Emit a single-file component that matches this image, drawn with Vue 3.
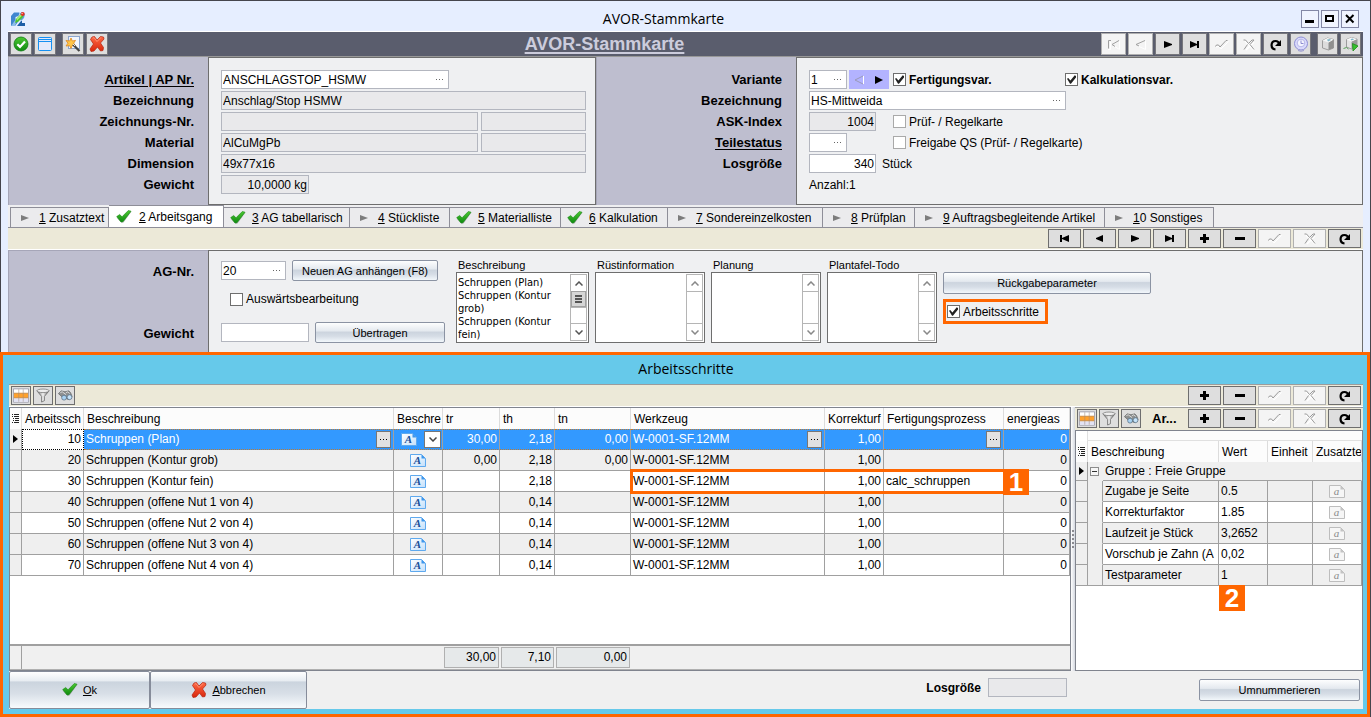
<script setup>
import { ref } from 'vue'

const recordNav = [
  { icon: 'first', off: true, label: 'Erster Datensatz' },
  { icon: 'prev', off: true, label: 'Voriger Datensatz' },
  { icon: 'next', label: 'Nächster Datensatz' },
  { icon: 'last', label: 'Letzter Datensatz' },
  { icon: 'post', off: true, label: 'Speichern' },
  { icon: 'cancel', off: true, label: 'Verwerfen' },
  { icon: 'refresh', label: 'Aktualisieren' },
]

const editNav = [
  { icon: 'plus', label: 'Hinzufügen' },
  { icon: 'minus', label: 'Löschen' },
  { icon: 'post', off: true, label: 'Speichern' },
  { icon: 'cancel', off: true, label: 'Verwerfen' },
  { icon: 'refresh', label: 'Aktualisieren' },
]

const agNav = [
  { icon: 'first', label: 'Erster Arbeitsgang' },
  { icon: 'prev', label: 'Voriger Arbeitsgang' },
  { icon: 'next', label: 'Nächster Arbeitsgang' },
  { icon: 'last', label: 'Letzter Arbeitsgang' },
  ...editNav,
]

const gridTools = [
  { icon: 'columns', label: 'Spalten' },
  { icon: 'funnel', label: 'Filter' },
  { icon: 'binoculars', label: 'Suchen' },
]

const tabs = [
  { key: '1', rest: ' Zusatztext' },
  { key: '2', rest: ' Arbeitsgang', done: true, active: true },
  { key: '3', rest: ' AG tabellarisch', done: true },
  { key: '4', rest: ' Stückliste' },
  { key: '5', rest: ' Materialliste', done: true },
  { key: '6', rest: ' Kalkulation', done: true },
  { key: '7', rest: ' Sondereinzelkosten' },
  { key: '8', rest: ' Prüfplan' },
  { key: '9', rest: ' Auftragsbegleitende Artikel' },
  { key: '1', rest: '0 Sonstiges' },
]

const memos = [
  {
    id: 'beschreibung',
    label: 'Beschreibung',
    wide: true,
    text: 'Schruppen (Plan)\nSchruppen (Kontur grob)\nSchruppen (Kontur fein)',
  },
  { id: 'ruest', label: 'Rüstinformation', text: '' },
  { id: 'planung', label: 'Planung', text: '' },
  { id: 'todo', label: 'Plantafel-Todo', text: '' },
]

const steps = [
  { nr: 10, name: 'Schruppen (Plan)', tr: '30,00', th: '2,18', tn: '0,00', process: '' },
  { nr: 20, name: 'Schruppen (Kontur grob)', tr: '0,00', th: '2,18', tn: '0,00', process: '' },
  { nr: 30, name: 'Schruppen (Kontur fein)', tr: '', th: '2,18', tn: '', process: 'calc_schruppen' },
  { nr: 40, name: 'Schruppen (offene Nut 1 von 4)', tr: '', th: '0,14', tn: '', process: '' },
  { nr: 50, name: 'Schruppen (offene Nut 2 von 4)', tr: '', th: '0,14', tn: '', process: '' },
  { nr: 60, name: 'Schruppen (offene Nut 3 von 4)', tr: '', th: '0,14', tn: '', process: '' },
  { nr: 70, name: 'Schruppen (offene Nut 4 von 4)', tr: '', th: '0,14', tn: '', process: '' },
]

const params = [
  { name: 'Zugabe je Seite', value: '0.5' },
  { name: 'Korrekturfaktor', value: '1.85' },
  { name: 'Laufzeit je Stück', value: '3,2652' },
  { name: 'Vorschub je Zahn (A', value: '0,02' },
  { name: 'Testparameter', value: '1' },
]

const fertigung = ref(true)
const kalkulation = ref(true)
const arbeitsschritte = ref(true)
</script>

<template>
  <div class="app">
    <svg class="sprite" width="0" height="0" aria-hidden="true">
      <defs>
        <linearGradient id="g-green" x1="0" y1="0" x2="0" y2="1">
          <stop offset="0" stop-color="#4cc832" />
          <stop offset="1" stop-color="#0f8a10" />
        </linearGradient>
        <linearGradient id="g-red" x1="0" y1="0" x2="0" y2="1">
          <stop offset="0" stop-color="#ff6a45" />
          <stop offset="1" stop-color="#d8260c" />
        </linearGradient>
        <linearGradient id="g-doc" x1="0" y1="0" x2="1" y2="1">
          <stop offset="0" stop-color="#ffffff" />
          <stop offset="1" stop-color="#c4e0fb" />
        </linearGradient>
        <linearGradient id="g-metal" x1="0" y1="0" x2="1" y2="0">
          <stop offset="0" stop-color="#6a6a6a" />
          <stop offset="0.5" stop-color="#f2f2f2" />
          <stop offset="1" stop-color="#5c5c5c" />
        </linearGradient>
      </defs>

      <symbol id="i-logo" viewBox="0 0 16 16">
        <path d="M1 15V5l3-3.500h5.500l-1 3.500-3 1v3l2-1.500 1.500 2-4 5.500z" fill="#3f86cf" />
        <path d="M1 15l5-7v4l-1 3z" fill="#8dbdea" />
        <path d="M7 15l4-5h1v2h3v3z" fill="#1d5ea6" />
        <path d="M9 3l3-2 3 2-1 4-3 3-1-2 2-3z" fill="#5f9fd8" />
        <path d="M5 12l1-4 5-5 2.500 2.500-5 5z" fill="#4fc52e" />
        <path d="M6.500 8l5-5 1 1-5.500 5.500z" fill="#aaf07c" />
        <circle cx="12.700" cy="3" r="2" fill="#e2301f" />
        <circle cx="12.100" cy="2.500" r=".7" fill="#ffc4b8" />
      </symbol>
      <symbol id="i-okcircle" viewBox="0 0 16 16">
        <circle cx="8" cy="8" r="7" fill="url(#g-green)" stroke="#0c7a10" stroke-width=".8" />
        <path d="M4.300 8.200l2.700 2.700L12 5.400" fill="none" stroke="#fff" stroke-width="2.200" />
      </symbol>
      <symbol id="i-window" viewBox="0 0 16 16">
        <rect x="1.500" y="1.500" width="13" height="13" rx="1" fill="#e3e9fb" stroke="#1590f2" />
        <path d="M2 3.500h12M2 5.500h12" stroke="#1590f2" />
      </symbol>
      <symbol id="i-wand" viewBox="0 0 16 16">
        <rect x="3.500" y=".5" width="11" height="12" fill="#f2f6fd" stroke="#8da6cd" />
        <path d="M6 2l1.300 3 3.200-.6-1.800 2.800 1.800 2.800-3.200-.5L6 12.500 4.700 9.700 1 10l2-2.800L1 4.500l3.700.5z" fill="#ffc64a" stroke="#e0861b" stroke-width=".8" />
        <path d="M8 8.500l6.500 6.500" stroke="#444" stroke-width="2.200" />
        <path d="M8 8l2 2" stroke="#e8e8e8" stroke-width="1" />
      </symbol>
      <symbol id="i-redx" viewBox="0 0 16 16">
        <path d="M3 1l2.500-.5L8 4l3.500-3.500L14.500 1 15 3l-3.500 4 3 4.500-.5 3-2.500.5L8.500 11 5 15l-3 .5L1 13l3.500-5L1.500 3.500z" fill="url(#g-red)" stroke="#b5220f" stroke-width=".7" />
        <path d="M3.500 2l1.500-.3L8 5.500l4-4" fill="none" stroke="#ff9c80" stroke-width=".8" />
      </symbol>
      <symbol id="i-check" viewBox="0 0 16 16">
        <path d="M1 9l3-2.500 2.500 2.300L12.500 2 15.500 2.600 7.500 13.500 5.500 13.700z" fill="#888" opacity=".6" />
        <path d="M.7 7.600L3.700 5.500 6 7.800 12.300 1.500 15 2.200 7 12.700 5 13z" fill="url(#g-green)" stroke="#178a14" stroke-width=".6" />
      </symbol>
      <symbol id="i-arrow" viewBox="0 0 8 8"><path d="M0 1l8 3-8 3z" fill="#7c7c7c" /></symbol>

      <symbol id="i-first" viewBox="0 0 15 15"><path d="M3 4h2v7H3zM12 4v7L5 8V7z" fill="#000" /></symbol>
      <symbol id="i-prev" viewBox="0 0 15 15"><path d="M11 4v7L4 8V7z" fill="#000" /></symbol>
      <symbol id="i-next" viewBox="0 0 15 15"><path d="M4 4v7l8-3V7z" fill="#000" /></symbol>
      <symbol id="i-last" viewBox="0 0 15 15"><path d="M3 4v7l7-3V7zM10 4h2v7h-2z" fill="#000" /></symbol>
      <symbol id="i-first-off" viewBox="0 0 15 15">
        <path d="M4.500 4.500V12.500H2M13.500 4v8.500L7 8.500" fill="none" stroke="#fff" />
        <path d="M5 3.500H2.500V11.500M13 3.500L6 7.500l3 2" fill="none" stroke="#a0a0a0" />
      </symbol>
      <symbol id="i-prev-off" viewBox="0 0 15 15">
        <path d="M12.500 4v8.500L5 9" fill="none" stroke="#fff" />
        <path d="M12 3.500L3 7.500l3 1.500" fill="none" stroke="#a0a0a0" />
      </symbol>
      <symbol id="i-post" viewBox="0 0 15 15">
        <path d="M2 10l3-.5 2 2.500 7-7V4" fill="none" stroke="#fff" />
        <path d="M1.500 9.500l1-1.500h2l1.500 2L12 3.500h1.500" fill="none" stroke="#999" />
      </symbol>
      <symbol id="i-cancel" viewBox="0 0 15 15">
        <path d="M4 4l9 9M13 5l-8 8" stroke="#fff" stroke-width="1.500" />
        <path d="M2.500 3h2l3 3.500L11 3h2L9 7.500l4 5M6.500 7.500L3 12.500" fill="none" stroke="#999" />
      </symbol>
      <symbol id="i-refresh" viewBox="0 0 15 15">
        <path d="M7.500 12.500C2 12 2.500 4 7.500 4c2.500 0 3.300 1.200 3.700 3" fill="none" stroke="#000" stroke-width="2.200" />
        <path d="M13 3v6H7z" fill="#000" />
      </symbol>
      <symbol id="i-plus" viewBox="0 0 15 15"><path d="M6 3h3v3h3v3H9v3H6V9H3V6h3z" fill="#000" /></symbol>
      <symbol id="i-minus" viewBox="0 0 15 15"><path d="M3 6h10v3H3z" fill="#000" /></symbol>

      <symbol id="i-clock" viewBox="0 0 16 16">
        <circle cx="8" cy="7.500" r="6.500" fill="#d9d9fb" stroke="#8f8fd6" />
        <circle cx="8" cy="7" r="3.800" fill="#f4f4ff" stroke="#a9a9e2" stroke-width=".8" />
        <path d="M8 4.500V7.500h2.500" stroke="#8c8cd0" fill="none" />
        <path d="M5 14.500q3 1.500 6 0" stroke="#9a9ad0" fill="none" />
      </symbol>
      <symbol id="i-box" viewBox="0 0 16 16">
        <path d="M2.500 4.500l5-2.500 6 1.500v8.500L8.500 14 2.500 12z" fill="#dcdcdc" stroke="#8c8c8c" stroke-width=".8" />
        <path d="M8.500 6.500l5-3v8.500l-5 2z" fill="#8f8f8f" />
        <path d="M2.500 4.500l6 2 5-3-6-1.500z" fill="#f6f6f6" />
        <path d="M7 3.500l3-.5 1 1-3 1.500z" fill="#7fb6c8" />
      </symbol>
      <symbol id="i-boxgo" viewBox="0 0 16 16">
        <path d="M3.500 3.500l5-2 5.500 1.500v7.500L8.500 13 3.500 11z" fill="#e4e4e4" stroke="#8c8c8c" stroke-width=".8" />
        <path d="M8.500 5.500l5.500-2.500v7.500l-5.500 2.500z" fill="#9a9a9a" />
        <path d="M3.500 3.500l5 2 5.500-2.500-5.500-1.500z" fill="#fafafa" />
        <path d="M7.500 3l2.500-.5 1 1-2.500 1z" fill="#7fb6c8" />
        <path d="M.5 12.500l3-1 2 1.500" stroke="#5aa35a" fill="none" />
        <path d="M9.500 7.500l5.500 2.500-5 5z" fill="#37c22f" stroke="#1f8c1c" stroke-width=".8" />
      </symbol>

      <symbol id="i-columns" viewBox="0 0 18 16">
        <path d="M.5.500h17v15H.5z" fill="#fff" stroke="#9a9aa8" />
        <path d="M1 11h16v4H1z" fill="#e2e2f4" />
        <path d="M1 5h16v6H1z" fill="#ffa12c" />
        <path d="M6.500 1v14M11.500 1v14M1 5.500h16M1 10.500h16" stroke="#a08a78" stroke-opacity=".6" />
      </symbol>
      <symbol id="i-funnel" viewBox="0 0 16 16">
        <path d="M1.500 3l5 6v6l3-1.500V9l5-6z" fill="url(#g-metal)" stroke="#666" stroke-width=".8" />
        <ellipse cx="8" cy="3" rx="6.500" ry="1.900" fill="#ededed" stroke="#777" stroke-width=".8" />
      </symbol>
      <symbol id="i-binoculars" viewBox="0 0 16 16">
        <path d="M1 6l3-3 4 1 4-1 2 2 1.500 4-3 3.500-3-1-1.500-3-3 1z" fill="#8e9090" stroke="#5e6060" stroke-width=".7" />
        <path d="M3 5l2-1 4 3M9 5l2-1 2 2" fill="none" stroke="#dedede" />
        <circle cx="7" cy="10.300" r="2.600" fill="#a8d2f2" stroke="#587086" stroke-width=".8" />
        <circle cx="12.800" cy="9.800" r="2.600" fill="#c5e2f8" stroke="#587086" stroke-width=".8" />
      </symbol>
      <symbol id="i-page" viewBox="0 0 16 13">
        <path d="M.5.500h11l4 4v8H.5z" fill="url(#g-doc)" stroke="#5ea9ee" />
        <path d="M11.500.500v4h4z" fill="#3f97ec" />
      </symbol>
      <symbol id="i-page-off" viewBox="0 0 16 13">
        <path d="M.5.500h11l4 4v8H.5z" fill="#f6f6f6" stroke="#bdbdbd" />
        <path d="M11.500.500v4h4z" fill="#c4c4c4" />
      </symbol>
      <symbol id="i-list" viewBox="0 0 7 9">
        <path d="M0 .5h1M2 .5h5M0 2.500h1M2 2.500h5M1 4.500h1M3 4.500h4M1 6.500h1M3 6.500h4M0 8.500h1M2 8.500h5" stroke="#222" />
      </symbol>
      <symbol id="i-current" viewBox="0 0 5 8"><path d="M0 0v8l5-4z" fill="#000" /></symbol>
      <symbol id="i-up" viewBox="0 0 8 5"><path d="M.5 4.500L4 1l3.500 3.500" fill="none" stroke="currentColor" stroke-width="1.500" /></symbol>
      <symbol id="i-down" viewBox="0 0 8 5"><path d="M.5.500L4 4 7.500.500" fill="none" stroke="currentColor" stroke-width="1.500" /></symbol>
      <symbol id="i-dots" viewBox="0 0 8 2"><path d="M0 0h1v1H0zM3 0h1v1H3zM6 0h1v1H6z" fill="currentColor" /></symbol>
    </svg>

    <main class="window">
      <header class="titlebar">
        <svg class="logo"><use href="#i-logo" /></svg>
        <h1 class="caption">AVOR-Stammkarte</h1>
        <div class="winbtns">
          <button class="winbtn" aria-label="Minimieren"><svg viewBox="0 0 10 10"><path d="M0 6h9v3H0z" /></svg></button>
          <button class="winbtn" aria-label="Maximieren"><svg viewBox="0 0 10 10"><path d="M0 1h9v7H0zM2 3v3h5V3z" fill-rule="evenodd" /></svg></button>
          <button class="winbtn" aria-label="Schließen"><svg viewBox="0 0 10 10"><path d="M1 1l7.500 7.500M8.500 1L1 8.500" stroke="#000" stroke-width="2" /></svg></button>
        </div>
      </header>

      <div class="toolbar">
        <button class="tool" aria-label="Übernehmen"><svg><use href="#i-okcircle" /></svg></button>
        <button class="tool" aria-label="Fenster"><svg><use href="#i-window" /></svg></button>
        <span class="gap"></span>
        <button class="tool" aria-label="Assistent"><svg><use href="#i-wand" /></svg></button>
        <button class="tool" aria-label="Löschen"><svg><use href="#i-redx" /></svg></button>
        <h2 class="heading">AVOR-Stammkarte</h2>
        <div class="right-tools">
          <button v-for="b in recordNav" :key="b.icon" class="nav top" :disabled="b.off" :aria-label="b.label">
            <svg><use :href="'#i-' + b.icon + (b.off && ['first', 'prev'].includes(b.icon) ? '-off' : '')" /></svg>
          </button>
          <button class="tool" aria-label="Zeit"><svg><use href="#i-clock" /></svg></button>
          <span class="gap"></span>
          <button class="tool" aria-label="Lager"><svg><use href="#i-box" /></svg></button>
          <button class="tool" aria-label="Buchen"><svg><use href="#i-boxgo" /></svg></button>
        </div>
      </div>

      <section class="master">
        <div class="labels">
          <label for="artikel"><a href="#artikel">Artikel | AP Nr.</a></label>
          <label for="bez1">Bezeichnung</label>
          <label for="zeichnung">Zeichnungs-Nr.</label>
          <label for="material">Material</label>
          <label for="dimension">Dimension</label>
          <label for="gewicht">Gewicht</label>
        </div>
        <div class="fields">
          <div class="row">
            <span class="lookup w228"><input id="artikel" value="ANSCHLAGSTOP_HSMW" /><button aria-label="Artikel wählen"><svg><use href="#i-dots" /></svg></button></span>
          </div>
          <div class="row"><input id="bez1" class="field w365" readonly value="Anschlag/Stop HSMW" /></div>
          <div class="row">
            <input id="zeichnung" class="field w257" readonly />
            <input class="field w105" readonly aria-label="Zeichnungsindex" />
          </div>
          <div class="row">
            <input id="material" class="field w257" readonly value="AlCuMgPb" />
            <input class="field w105" readonly aria-label="Materialzusatz" />
          </div>
          <div class="row"><input id="dimension" class="field w365" readonly value="49x77x16" /></div>
          <div class="row"><input id="gewicht" class="field w88 num" readonly value="10,0000 kg" /></div>
        </div>
        <div class="labels">
          <label for="variante">Variante</label>
          <label for="bez2">Bezeichnung</label>
          <label for="ask">ASK-Index</label>
          <label for="teilestatus"><a href="#teilestatus">Teilestatus</a></label>
          <label for="los">Losgröße</label>
        </div>
        <div class="fields">
          <div class="row split">
            <div class="variant">
              <span class="lookup w38"><input id="variante" value="1" /><button aria-label="Variante wählen"><svg><use href="#i-dots" /></svg></button></span>
              <span class="stepper">
                <button aria-label="Vorige Variante"><svg viewBox="0 0 10 10"><path d="M9.500 1v8" stroke="#fff" /><path d="M9 1L1 5l8 4" fill="none" stroke="#9a9ab8" /></svg></button>
                <button aria-label="Nächste Variante"><svg viewBox="0 0 10 10"><path d="M1 1v8l8-4z" /></svg></button>
              </span>
            </div>
            <label class="check strong"><input v-model="fertigung" type="checkbox" />Fertigungsvar.</label>
            <label class="check strong"><input v-model="kalkulation" type="checkbox" />Kalkulationsvar.</label>
          </div>
          <div class="row">
            <span class="lookup w257"><input id="bez2" value="HS-Mittweida" /><button aria-label="Bezeichnung wählen"><svg><use href="#i-dots" /></svg></button></span>
          </div>
          <div class="row split">
            <input id="ask" class="field w67 num" readonly value="1004" />
            <label class="check soft"><input type="checkbox" />Prüf- / Regelkarte</label>
          </div>
          <div class="row split">
            <span class="lookup w38"><input id="teilestatus" /><button aria-label="Teilestatus wählen"><svg><use href="#i-dots" /></svg></button></span>
            <label class="check soft wide">
              <input type="checkbox" />Freigabe QS (Prüf- / Regelkarte)
            </label>
          </div>
          <div class="row unit"><input id="los" class="field w67 num white" value="340" /><span>Stück</span></div>
          <div class="row">Anzahl:1</div>
        </div>
      </section>

      <div class="tabs" role="tablist">
        <button v-for="(t, i) in tabs" :key="i" role="tab" class="tab" :class="{ active: t.active }" :aria-selected="!!t.active">
          <span class="tabicon">
            <svg v-if="t.done" class="done"><use href="#i-check" /></svg>
            <svg v-else class="todo"><use href="#i-arrow" /></svg>
          </span>
          <span><u>{{ t.key }}</u>{{ t.rest }}</span>
        </button>
      </div>

      <div class="navstrip">
        <button v-for="b in agNav" :key="b.label" class="nav" :disabled="b.off" :aria-label="b.label">
          <svg><use :href="'#i-' + b.icon" /></svg>
        </button>
      </div>

      <section class="operation">
        <div class="labels op">
          <label for="agnr">AG-Nr.</label>
          <label for="aggewicht">Gewicht</label>
        </div>
        <div class="opfields">
          <div class="opleft">
            <div class="oprow">
              <span class="lookup w65"><input id="agnr" value="20" /><button aria-label="AG wählen"><svg><use href="#i-dots" /></svg></button></span>
              <button class="push grow">Neuen AG anhängen (F8)</button>
            </div>
            <label class="check ext"><input type="checkbox" />Auswärtsbearbeitung</label>
            <div class="oprow">
              <input id="aggewicht" class="field w88 white" />
              <button class="push w130">Übertragen</button>
            </div>
          </div>
          <div v-for="m in memos" :key="m.id" class="memo" :class="{ wide: m.wide }">
            <label :for="m.id">{{ m.label }}</label>
            <div class="memobox">
              <textarea :id="m.id" :value="m.text"></textarea>
              <div class="scroll">
                <button aria-label="Nach oben"><svg><use href="#i-up" /></svg></button>
                <span v-if="m.text" class="thumb"></span>
                <span class="track"></span>
                <button aria-label="Nach unten"><svg><use href="#i-down" /></svg></button>
              </div>
            </div>
          </div>
          <div class="opright">
            <button class="push tall">Rückgabeparameter</button>
            <label class="check marked"><input v-model="arbeitsschritte" type="checkbox" />Arbeitsschritte</label>
          </div>
        </div>
      </section>
    </main>

    <section class="dialog">
      <h2 class="caption dlg">Arbeitsschritte</h2>
      <div class="sheet">
        <div class="gridbar">
          <button v-for="g in gridTools" :key="g.icon" class="gtool" :aria-label="g.label"><svg><use :href="'#i-' + g.icon" /></svg></button>
          <div class="navgroup">
            <button v-for="b in editNav" :key="b.icon" class="nav" :disabled="b.off" :aria-label="b.label"><svg><use :href="'#i-' + b.icon" /></svg></button>
          </div>
        </div>

        <div class="panes">
          <div class="gridpane">
            <table class="grid">
              <colgroup>
                <col class="c12" /><col class="c62" /><col /><col class="c49" /><col class="c57" /><col class="c55" />
                <col class="c76" /><col class="c194" /><col class="c59" /><col class="c120" /><col class="c66" />
              </colgroup>
              <thead>
                <tr>
                  <th class="ind"><svg class="list"><use href="#i-list" /></svg></th>
                  <th>Arbeitssch</th>
                  <th>Beschreibung</th>
                  <th>Beschre</th>
                  <th>tr</th>
                  <th>th</th>
                  <th>tn</th>
                  <th>Werkzeug</th>
                  <th>Korrekturf</th>
                  <th>Fertigungsprozess</th>
                  <th>energieas</th>
                </tr>
              </thead>
              <tbody>
                <tr v-for="(s, i) in steps" :key="s.nr" :class="{ selected: i === 0 }">
                  <td class="ind"><svg v-if="i === 0" class="current"><use href="#i-current" /></svg></td>
                  <td class="num first">{{ s.nr }}</td>
                  <td class="over">{{ s.name }}<button v-if="i === 0" class="dots" aria-label="Beschreibung bearbeiten"><svg><use href="#i-dots" /></svg></button></td>
                  <td class="doc">
                    <span class="page"><svg><use href="#i-page" /></svg><b>A</b></span>
                    <button v-if="i === 0" class="drop" aria-label="Auswahl öffnen"><svg><use href="#i-down" /></svg></button>
                  </td>
                  <td class="num">{{ s.tr }}</td>
                  <td class="num">{{ s.th }}</td>
                  <td class="num">{{ s.tn }}</td>
                  <td class="over">W-0001-SF.12MM<button v-if="i === 0" class="dots" aria-label="Werkzeug wählen"><svg><use href="#i-dots" /></svg></button></td>
                  <td class="num">1,00</td>
                  <td class="over">
                    {{ s.process }}<button v-if="i === 0" class="dots" aria-label="Prozess wählen"><svg><use href="#i-dots" /></svg></button>
                    <span v-if="s.process" class="frame"></span>
                    <span v-if="s.process" class="badge one">1</span>
                  </td>
                  <td class="num">0</td>
                </tr>
              </tbody>
            </table>
            <div class="summary">
              <span class="sind"></span><span></span><span></span><span></span>
              <output>30,00</output><output>7,10</output><output>0,00</output>
            </div>
          </div>

          <div class="splitter"><i></i><i></i><i></i><i></i><i></i></div>

          <div class="parampane">
            <div class="gridbar small">
              <button v-for="g in gridTools" :key="g.icon" class="gtool" :aria-label="g.label"><svg><use :href="'#i-' + g.icon" /></svg></button>
              <strong class="short">Ar...</strong>
              <div class="navgroup">
                <button v-for="b in editNav" :key="b.icon" class="nav" :disabled="b.off" :aria-label="b.label"><svg><use :href="'#i-' + b.icon" /></svg></button>
              </div>
            </div>
            <div class="paramgrid">
              <div class="band"></div>
              <table class="grid params">
                <colgroup>
                  <col class="c12" /><col class="c15" /><col /><col class="c49" /><col class="c45" /><col class="c49" />
                </colgroup>
                <thead>
                  <tr>
                    <th class="ind"><svg class="list"><use href="#i-list" /></svg></th>
                    <th colspan="2">Beschreibung</th>
                    <th>Wert</th>
                    <th>Einheit</th>
                    <th>Zusatzte</th>
                  </tr>
                </thead>
                <tbody>
                  <tr class="group">
                    <td class="ind"><svg class="current"><use href="#i-current" /></svg></td>
                    <td class="indent"><button class="fold" aria-label="Gruppe einklappen"></button></td>
                    <td colspan="4">Gruppe : Freie Gruppe</td>
                  </tr>
                  <tr v-for="(p, i) in params" :key="p.name">
                    <td class="ind"></td>
                    <td class="indent"></td>
                    <td>{{ p.name }}</td>
                    <td class="over">{{ p.value }}<span v-if="i === params.length - 1" class="badge two">2</span></td>
                    <td></td>
                    <td class="doc"><span class="page off"><svg><use href="#i-page-off" /></svg><b>a</b></span></td>
                  </tr>
                </tbody>
              </table>
            </div>
          </div>
        </div>

        <footer class="foot">
          <button class="big ok"><svg><use href="#i-check" /></svg><span><u>O</u>k</span></button>
          <button class="big esc"><svg><use href="#i-redx" /></svg><span><u>A</u>bbrechen</span></button>
          <div class="footright">
            <label for="sumlos">Losgröße</label>
            <input id="sumlos" class="field w79" readonly />
          </div>
          <button class="push renum">Umnummerieren</button>
        </footer>
      </div>
    </section>
  </div>
</template>

<style>
body {
  margin: 0;
  background: #45454d;
}
</style>

<style scoped>
.app,
.app * {
  box-sizing: border-box;
}
.app {
  display: flex;
  flex-direction: column;
  min-height: 100vh;
  font: 12px/16px "Liberation Sans", Arial, sans-serif;
  color: #000;
}
.sprite {
  position: absolute;
}
.app button,
.app input,
.app textarea {
  font: inherit;
  color: inherit;
  margin: 0;
  padding: 0;
}
.app button {
  display: flex;
  align-items: center;
  justify-content: center;
  border: 0;
  background: none;
}
h1,
h2 {
  margin: 0;
}

/* main window */
.window {
  border: 1px solid #45454d;
  border-bottom: 0;
  padding: 0 7px;
  background: #e6eeff;
}
.titlebar {
  display: grid;
  grid-template-columns: 1fr auto 1fr;
  align-items: center;
  height: 30px;
  padding: 5px 4px 0 2px;
}
.logo {
  width: 16px;
  height: 16px;
}
.caption {
  font: 14px/20px "Open Sans", "Noto Sans", sans-serif;
  text-align: center;
}
.titlebar .caption {
  padding-right: 42px;
}
.winbtns {
  display: flex;
  gap: 2px;
  justify-content: flex-end;
}
.app .winbtn {
  width: 18px;
  height: 18px;
  border: 1px solid #8488a6;
  background: #f0f4ff;
}
.winbtn svg {
  width: 10px;
  height: 10px;
}

.toolbar {
  display: flex;
  align-items: center;
  gap: 2px;
  height: 26px;
  padding: 0 2px;
  background: #5a5d6d;
  border-top: 1px solid #fff;
  border-bottom: 1px solid #989898;
}
.gap {
  width: 2px;
}
.app .tool {
  width: 22px;
  height: 22px;
  border: 1px solid #77777c;
  background: #dedede;
}
.app .right-tools .tool {
  width: 21px;
}
.tool svg {
  width: 16px;
  height: 16px;
}
.heading {
  flex: 1;
  text-align: center;
  font-size: 18px;
  line-height: 22px;
  color: #ccccdc;
  text-decoration: underline;
  text-decoration-thickness: 2px;
  text-underline-offset: 2px;
}
.right-tools {
  display: flex;
  gap: 2px;
}
.app .nav {
  width: 33px;
  height: 19px;
  border: 1px solid #6e6e6e;
  background: #dedede;
}
.app .nav.top {
  width: 25px;
  height: 22px;
  border-color: #77777c;
}
.app .nav:disabled {
  background: #f4f4f4;
  border-color: #b0b0b0;
}
.nav svg {
  width: 15px;
  height: 15px;
}

.master {
  display: grid;
  grid-template-columns: 200px 388px 200px 1fr;
  height: 148px;
}
.labels {
  display: flex;
  flex-direction: column;
  padding: 13px 14px 0 0;
  border-left: 1px solid #a6a6b8;
  background: #bebecf;
  font-weight: bold;
  font-size: 13px;
  line-height: 19px;
  text-align: right;
  gap: 2px;
}
.labels a {
  color: inherit;
  text-underline-offset: 2px;
}
.fields {
  display: flex;
  flex-direction: column;
  gap: 2px;
  padding: 12px 0 0 12px;
  border: 1px solid #6e6e6e;
  background: #eff0f2;
}
.row {
  display: flex;
  align-items: center;
  gap: 3px;
  height: 19px;
  white-space: nowrap;
}
.row.split {
  display: grid;
  grid-template-columns: 84px 172px auto;
  gap: 0;
  justify-content: start;
}
.row.unit {
  gap: 6px;
}
.app .field,
.lookup {
  height: 19px;
  border: 1px solid #b3b6bf;
  background: #e9e9eb;
}
.app .field {
  padding: 0 1px;
}
.app .field.num {
  text-align: right;
}
.app .field.white,
.lookup {
  background: #fff;
}
.lookup {
  display: flex;
  align-items: center;
}
.app .lookup input {
  flex: 1;
  min-width: 0;
  height: 17px;
  padding: 0 0 0 1px;
  border: 0;
  background: none;
}
.app .lookup button {
  width: 17px;
  height: 17px;
  color: #666;
}
.lookup svg {
  width: 8px;
  height: 2px;
}
.w38 { width: 38px; }
.w65 { width: 65px; }
.w67 { width: 67px; }
.w79 { width: 79px; }
.w88 { width: 88px; }
.w105 { width: 105px; }
.w130 { width: 130px; }
.w228 { width: 228px; }
.w257 { width: 257px; }
.w365 { width: 365px; }
.variant {
  display: flex;
  gap: 2px;
}
.stepper {
  display: flex;
  align-items: center;
  justify-content: space-around;
  width: 40px;
  height: 19px;
  background: #b3b3ff;
}
.stepper svg {
  width: 10px;
  height: 10px;
}
.check {
  display: flex;
  align-items: center;
  gap: 3px;
}
.check.strong {
  font-weight: bold;
}
.check.wide {
  grid-column: 2 / 4;
}
.app .check input {
  appearance: none;
  display: flex;
  align-items: center;
  justify-content: center;
  width: 13px;
  height: 13px;
  border: 1px solid #6e6e6e;
  background: #fff;
}
.app .check.soft input {
  border-color: #a9a9a9;
}
.check input:checked::after {
  content: "";
  width: 9px;
  height: 9px;
  background: #222;
  clip-path: polygon(0 42%, 14% 34%, 38% 62%, 86% 4%, 100% 12%, 100% 28%, 44% 96%, 34% 96%);
}

/* tabs */
.tabs {
  display: grid;
  grid-template-columns: 99px 115px 126px 100px 111px 107px 155px 92px 190px 109px;
  align-items: end;
  height: 23px;
  padding-left: 2px;
  border-bottom: 1px solid #8e8e98;
  background: #efeff1;
}
.app .tab {
  justify-content: flex-start;
  height: 20px;
  border: 1px solid #8e8e98;
  border-width: 1px 1px 0 0;
  background: #ebebed;
  white-space: nowrap;
}
.app .tab:first-child {
  border-left-width: 1px;
}
.app .tab.active {
  height: 22px;
  background: #fff;
}
.tabicon {
  display: flex;
  align-items: center;
  justify-content: center;
  width: 28px;
}
.done {
  width: 16px;
  height: 16px;
}
.todo {
  width: 8px;
  height: 8px;
}
.tab.active .tabicon {
  width: 30px;
}
.navstrip {
  display: flex;
  justify-content: flex-end;
  gap: 2px;
  height: 22px;
  padding: 1px 2px 0 0;
  background: #ece9d8;
  border-bottom: 1px solid #fff;
}

/* operation */
.operation {
  display: grid;
  grid-template-columns: 200px 1fr;
  height: 102px;
}
.labels.op {
  justify-content: space-between;
  padding: 11px 14px 9px 0;
  border-top: 1px solid #a6a6b8;
}
.opfields {
  display: flex;
  gap: 6px;
  padding: 7px 0 0 12px;
  border: 1px solid #6e6e6e;
  border-bottom: 0;
  background: #eff0f2;
}
.opleft {
  width: 224px;
  margin-right: 5px;
  padding-top: 2px;
}
.oprow {
  display: flex;
  align-items: center;
  gap: 6px;
  height: 21px;
}
.ext {
  height: 16px;
  margin: 10px 0 15px 9px;
}
.app .push {
  height: 21px;
  border: 1px solid #8b93a3;
  border-radius: 2px;
  background: linear-gradient(#fdfefe, #e4e9ef 42%, #ccd4de 48%, #d6dde6 70%, #f2f7fb);
  font-size: 11px;
  white-space: nowrap;
}
.push.grow {
  width: 146px;
}
.app .push.tall {
  width: 208px;
  height: 22px;
}
.memo {
  width: 110px;
}
.memo.wide {
  width: 133px;
}
.memo label {
  display: block;
  padding-left: 2px;
  font-size: 11px;
  line-height: 14px;
}
.memobox {
  display: flex;
  height: 71px;
  padding: 1px;
  border: 1px solid #6e6e6e;
  background: #fff;
}
.app .memobox textarea {
  flex: 1;
  min-width: 0;
  padding: 2px 0 0;
  border: 0;
  resize: none;
  overflow: hidden;
  background: none;
  font: 11px/13px "DejaVu Sans Condensed", "Liberation Sans", sans-serif;
}
.scroll {
  display: flex;
  flex-direction: column;
  width: 17px;
  border: 1px solid #b5b5b5;
  color: #888;
}
.memo.wide .scroll {
  color: #555;
}
.scroll button {
  height: 16px;
}
.scroll svg {
  width: 8px;
  height: 5px;
}
.track {
  flex: 1;
  border: 1px solid #b5b5b5;
  border-width: 1px 0;
}
.thumb {
  height: 16px;
  border: 1px solid #a0a0a0;
  background: repeating-linear-gradient(#555 0 2px, #d6d6d6 2px 3px) center / 7px 8px no-repeat #d6d6d6;
}
.opright {
  padding-top: 14px;
}
.marked {
  width: 105px;
  height: 25px;
  margin-top: 5px;
  padding-left: 1px;
  border: 3px solid #ff6600;
}

/* dialog */
.dialog {
  display: flex;
  flex-direction: column;
  flex: 1;
  margin-right: 1px;
  padding: 0 4px 5px 6px;
  border: 3px solid #ff6600;
  background: #66c9ea;
}
.dlg {
  height: 29px;
  padding-top: 4px;
}
.sheet {
  display: flex;
  flex-direction: column;
  flex: 1;
  background: #f0f0f0;
}
.gridbar {
  display: flex;
  align-items: center;
  gap: 2px;
  height: 23px;
  padding: 0 2px;
  background: #ece9d8;
  border-top: 1px solid #9c9c9c;
  border-bottom: 1px solid #fff;
}
.app .gtool {
  width: 20px;
  height: 19px;
  border: 1px solid #6e6e6e;
  background: #dedede;
}
.gtool svg {
  width: 16px;
  height: 15px;
}
.navgroup {
  display: flex;
  gap: 2px;
  margin-left: auto;
}
.panes {
  display: flex;
  flex: 1;
}
.gridpane {
  display: flex;
  flex-direction: column;
  flex: 1;
  border: 1px solid #80848e;
  background: #fff;
}
.splitter {
  display: flex;
  flex-direction: column;
  justify-content: center;
  align-items: center;
  gap: 2px;
  width: 4px;
  background: linear-gradient(90deg, #fff, #d4d8e0);
}
.splitter i {
  width: 2px;
  height: 2px;
  background: #8a8a90;
}
.parampane {
  display: flex;
  flex-direction: column;
  width: 288px;
}
.gridbar.small {
  border-bottom-color: #ece9d8;
}
.short {
  padding-left: 9px;
  font-size: 13px;
}
.paramgrid {
  flex: 1;
  border: 1px solid #80848e;
  background: #fff;
}
.band {
  height: 10px;
  margin-left: 11px;
  border-left: 1px solid #e0e0e0;
  border-bottom: 1px solid #e0e0e0;
  background: #fcfcfc;
}
.grid {
  width: 100%;
  table-layout: fixed;
  border-collapse: separate;
  border-spacing: 0;
}
.c12 { width: 12px; }
.c15 { width: 15px; }
.c45 { width: 45px; }
.c49 { width: 49px; }
.c55 { width: 55px; }
.c57 { width: 57px; }
.c59 { width: 59px; }
.c62 { width: 62px; }
.c66 { width: 66px; }
.c76 { width: 76px; }
.c120 { width: 120px; }
.c194 { width: 194px; }
.grid th {
  height: 21px;
  padding: 0 0 0 3px;
  border-right: 1px solid #dcdcdc;
  background: #fcfcfc;
  font-weight: normal;
  text-align: left;
  white-space: nowrap;
  overflow: hidden;
}
.grid td {
  height: 21px;
  padding: 0 2px;
  border-right: 1px solid #a0a0a0;
  border-bottom: 1px solid #a0a0a0;
  background: #fff;
  white-space: nowrap;
  overflow: hidden;
}
.grid tbody tr:nth-child(even) td,
.grid td.ind,
.grid td.indent {
  background: #efefef;
}
.grid .ind {
  padding: 0 0 0 3px;
}
.grid th.ind {
  padding-left: 2px;
}
.grid td.num {
  text-align: right;
}
.grid td.over {
  position: relative;
  overflow: visible;
}
.list {
  display: block;
  width: 7px;
  height: 9px;
}
.current {
  display: block;
  width: 5px;
  height: 8px;
}
.grid .selected td:not(.ind) {
  padding-bottom: 1px;
  border-top: 1px dotted #c07a30;
  border-bottom: 1px dotted #c07a30;
  background: #3399ff;
  color: #fff;
}
.grid .selected td.first {
  border: 1px dotted #000;
  background: #fff;
  color: #000;
}
.app .dots {
  position: absolute;
  top: 1px;
  right: 2px;
  width: 15px;
  height: 17px;
  border: 1px solid #777;
  background: #e2e2e2;
  color: #000;
}
.dots svg {
  width: 8px;
  height: 2px;
}
.grid td.doc {
  position: relative;
  text-align: center;
}
.page {
  display: inline-grid;
  place-items: center;
  width: 16px;
  height: 13px;
  vertical-align: middle;
}
.page svg,
.page b {
  grid-area: 1 / 1;
}
.page svg {
  width: 16px;
  height: 13px;
}
.page b {
  padding-right: 1px;
  font: italic bold 11px/13px "Liberation Serif", serif;
  color: #1a4f98;
}
.page.off b {
  font-weight: normal;
  color: #8a8a8a;
}
.grid .selected td.doc {
  padding-right: 20px;
}
.app .drop {
  position: absolute;
  top: 1px;
  right: 1px;
  width: 17px;
  height: 17px;
  border: 1px solid #777;
  background: #fff;
  color: #444;
}
.drop svg {
  width: 8px;
  height: 5px;
}
.frame {
  position: absolute;
  z-index: 1;
  top: -2px;
  right: 0;
  width: 373px;
  height: 25px;
  border: 3px solid #ff6600;
  border-right: 0;
}
.badge {
  position: absolute;
  z-index: 2;
  width: 26px;
  height: 26px;
  background: #ff6600;
  color: #fff;
  font-weight: bold;
  font-size: 26px;
  line-height: 26px;
  text-align: center;
}
.badge.one {
  top: -2px;
  left: 100%;
}
.badge.two {
  top: 100%;
  left: 0;
}
.params .group td {
  height: 19px;
  background: #efefef;
  border-right-color: #efefef;
}
.params .group td.ind {
  border-right-color: #a0a0a0;
}
.params .group td.indent,
.params tr:not(:last-child) td.indent {
  border-bottom-color: #efefef;
}
.params tbody tr:nth-child(even) td:not(.ind):not(.indent) {
  background: #efefef;
}
.params tbody tr:nth-child(odd):not(.group) td:not(.ind):not(.indent) {
  background: #fff;
}
.app .fold {
  width: 9px;
  height: 9px;
  border: 1px solid #8c8c8c;
  background: linear-gradient(#333, #333) center / 5px 1px no-repeat #f6f6f6;
}
.summary {
  display: grid;
  grid-template-columns: 12px 62px 1fr 49px 57px 55px 76px 194px 59px 120px 66px;
  align-items: center;
  height: 26px;
  margin-top: auto;
  border-top: 2px solid #a0a0a0;
  border-bottom: 1px solid #b0b0b0;
  background: #f0f0f0;
}
.sind {
  align-self: stretch;
  border-right: 1px solid #a0a0a0;
}
.summary output {
  height: 21px;
  margin: 0 1px;
  padding-right: 2px;
  border: 1px solid #b0b0b0;
  background: #e6e9ea;
  line-height: 19px;
  text-align: right;
}

.foot {
  display: flex;
  height: 38px;
}
.app .big {
  gap: 5px;
  border: 1px solid #868c9a;
  border-radius: 2px;
  background: linear-gradient(#fff, #e8edf2 24%, #cbd4de 28%, #d8dfe7 60%, #f8fbfd);
  font-size: 11px;
}
.big svg {
  width: 16px;
  height: 16px;
}
.ok {
  width: 141px;
}
.esc {
  width: 157px;
}
.footright {
  display: flex;
  align-items: center;
  gap: 7px;
  height: 33px;
  margin-left: auto;
  font-weight: bold;
}
.app .push.renum {
  width: 161px;
  height: 22px;
  margin: 8px 3px 0 132px;
}
</style>
